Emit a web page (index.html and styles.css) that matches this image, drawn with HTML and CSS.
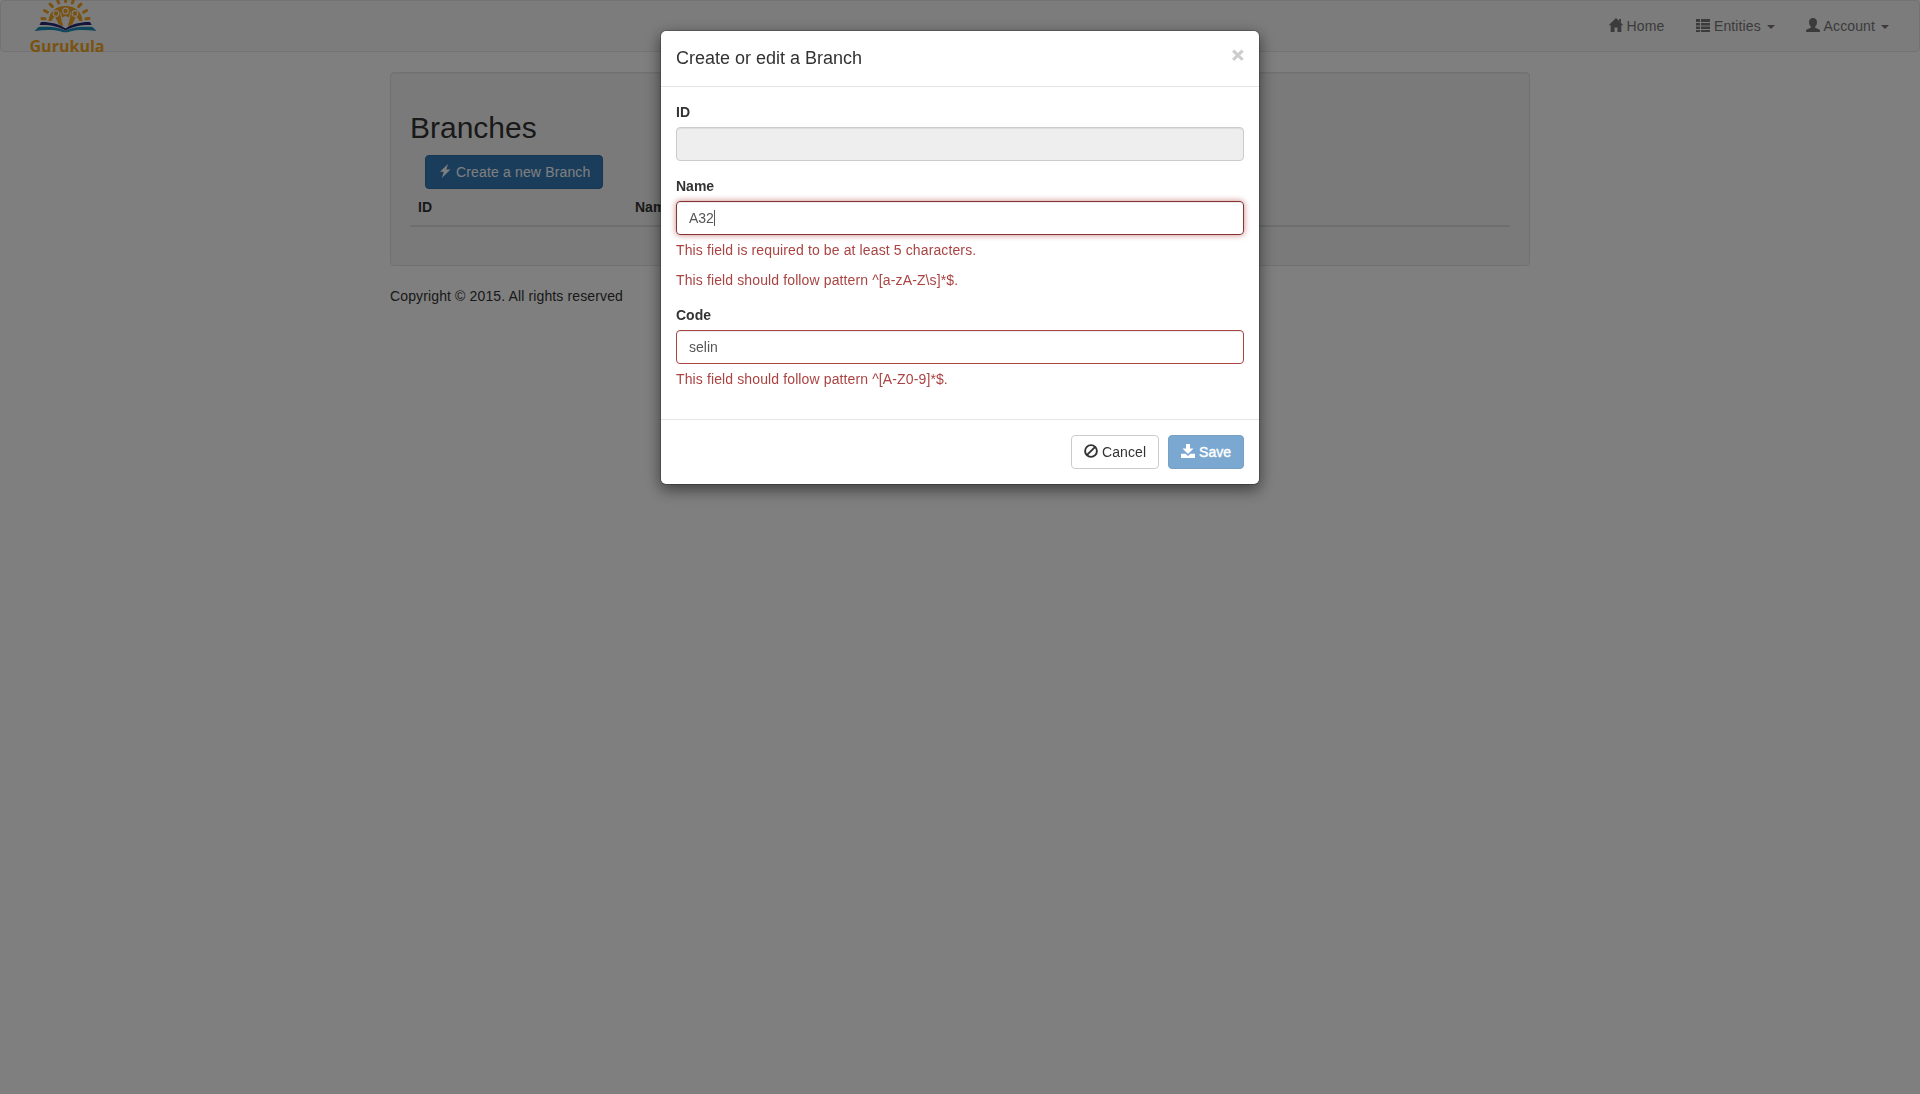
FILE: index.html
```html
<!DOCTYPE html>
<html lang="en">
<head>
<meta charset="utf-8">
<title>Branches</title>
<link rel="stylesheet" href="styles.css">
</head>
<body>
<nav class="navbar">
  <a class="brand" aria-label="Gurukula">
    <svg width="84" height="56" viewBox="0 0 84 56">
      <path fill="none" stroke="#f5a623" stroke-width="3" stroke-linecap="round" d="M16 18.500l3 .3M18.500 10.500l3 1.700M24 4l2.300 2.600M31.500 0l1.200 3M39.500 -2v3.500M47.500 0l-1.200 3M55 4l-2.300 2.600M60.500 10.500l-3 1.700M63 18.500l-3 .3"/>
      <path fill="#f5a623" d="M22.500 21C23 12 30 6 39.500 6S56 12 56.500 21l-3.500-.2c-.5-2-1.500-3.300-3-4.300L46.500 24l-4.500 2.500 1-9-3.500-1.500-3.500 1.500 1 9-4.500-2.500L29 16.500c-1.500 1-2.500 2.300-3 4.300z"/>
      <g fill="#f5a623" stroke="#f8f8f8" stroke-width="1.200"><circle cx="30" cy="13.500" r="2.800"/><circle cx="39.500" cy="11" r="2.800"/><circle cx="49" cy="13.500" r="2.800"/></g>
      <path fill="none" stroke="#f8f8f8" stroke-width="1" d="M34.500 12.500L36.500 23M44.500 12.500L42.500 23"/>
      <path fill="#2b2a78" d="M15 22c9-.2 18 1.800 24.500 6.500C46 23.800 55 21.800 64 22l1.700 3C56 24.500 46 26.500 39.500 30.500 33 26.500 24 24.500 13.500 25z"/>
      <path fill="#1d8cbd" d="M12.500 27C24 26 33 27 39.500 30.500 46 27 55 26 66.500 27l4 4C59 29.700 49 29.500 41.500 32.300h-4C30 29.500 20 29.700 8.500 31z"/>
      <text class="brand-text" x="3.500" y="52" textLength="75" lengthAdjust="spacingAndGlyphs">Gurukula</text>
    </svg>
  </a>
  <div class="menu">
    <a><svg class="icon" viewBox="0 0 14 14"><path d="M7 0l7.300 7.200h-2V14H8.500V9.500h-3V14H1.700V7.200h-2L7 0z"/><path d="M10 1h2v4l-2-2z"/></svg> Home</a>
    <a><svg class="icon" viewBox="0 0 14 14"><path d="M0 1h4v3H0zM5 1h9v3H5zM0 5h4v2.500H0zM5 5h9v2.500H5zM0 8.500h4V11H0zM5 8.500h9V11H5zM0 12h4v2H0zM5 12h9v2H5z"/></svg> Entities <b class="caret"></b></a>
    <a><svg class="icon" viewBox="0 0 14 14"><path d="M7 0c2.600 0 4 1.800 4 4.300 0 1.800-.8 3.400-1.800 4.300v1.200c1.600.8 4.800 1.400 4.800 3V14H0v-1.200c0-1.600 3.200-2.200 4.800-3V8.600C3.800 7.700 3 6.100 3 4.300 3 1.800 4.400 0 7 0z"/></svg> Account <b class="caret"></b></a>
  </div>
</nav>
<main class="container">
  <section class="well">
    <h2>Branches</h2>
    <div class="actions"><button class="btn primary create"><svg class="icon" viewBox="0 0 14 14"><path d="M10 0L2 7.800h3.800L3.800 14 12.500 5.500H8.300z"/></svg> Create a new Branch</button></div>
    <table><thead><tr><th class="col-id">ID</th><th>Name</th></tr></thead></table>
  </section>
  <p class="copyright">Copyright © 2015. All rights reserved</p>
</main>
<div class="backdrop">
  <form class="modal">
    <header><h4>Create or edit a Branch</h4><span class="close">×</span></header>
    <div class="modal-body">
      <div class="group"><label>ID</label><div class="input readonly"></div></div>
      <div class="group"><label>Name</label><div class="input invalid focused">A32<span class="cursor"></span></div>
        <p>This field is required to be at least 5 characters.</p>
        <p>This field should follow pattern ^[a-zA-Z\s]*$.</p></div>
      <div class="group"><label>Code</label><div class="input invalid">selin</div>
        <p>This field should follow pattern ^[A-Z0-9]*$.</p></div>
    </div>
    <footer>
      <button type="button" class="btn"><svg class="icon" viewBox="0 0 14 14"><g fill="none" stroke="currentColor" stroke-width="1.900"><circle cx="7" cy="7" r="5.900"/><path d="M2.800 11.200l8.400-8.400"/></g></svg> Cancel</button>
      <button type="button" class="btn primary disabled"><svg class="icon" viewBox="0 0 14 14"><path d="M5 0h4v4.500h3.500L7 10 1.500 4.500H5zM0 9.800h4.500L7 12l2.500-2.200H14V14H0z"/></svg> Save</button>
    </footer>
  </form>
</div>
</body>
</html>
```
FILE: styles.css
```css
* { box-sizing: border-box; }
body { margin: 0; font: 14px/20px "Liberation Sans", Arial, sans-serif; color: #333; background: #fff; overflow: hidden; }
.navbar { display: flex; justify-content: space-between; height: 52px; margin-bottom: 20px; padding: 0 15px 0 25px; border: 1px solid #e7e7e7; border-radius: 4px; background: #f8f8f8; }
.brand { height: 50px; margin-top: -1px; }
.brand svg { display: block; overflow: visible; }
.brand-text { font: bold 15.5px "Open Sans", sans-serif; fill: #f5a623; }
.menu { display: flex; gap: 1.5px; color: #777; letter-spacing: .12px; }
.menu a { padding: 15px; line-height: 20px; white-space: nowrap; }
.icon { display: inline-block; width: 14px; height: 14px; vertical-align: -2px; fill: currentColor; overflow: visible; }
.menu .icon { vertical-align: -1px; }
.caret { display: inline-block; margin-left: 2px; vertical-align: middle; border-top: 4px solid; border-right: 4px solid transparent; border-left: 4px solid transparent; }
.container { width: 1140px; margin: 0 auto; }
.well { height: 194px; padding: 19px; margin-bottom: 20px; border: 1px solid #e3e3e3; border-radius: 4px; background: #f5f5f5; box-shadow: inset 0 1px 1px rgba(0,0,0,.05); }
h2 { margin: 19px 0 11px; font-size: 30px; font-weight: 500; line-height: 1.1; }
.actions { padding-left: 15px; height: 34px; }
.btn { height: 34px; padding: 6px 12px; border: 1px solid #ccc; border-radius: 4px; background: #fff; color: #333; font: inherit; letter-spacing: .1px; white-space: nowrap; }
.btn .icon { vertical-align: -1px; }
.primary { color: #fff; border-color: #2e6da4; background: #337ab7; }
.create { letter-spacing: .15px; }
table { width: 100%; table-layout: fixed; border-collapse: separate; border-spacing: 0; }
th { padding: 8px; text-align: left; border-bottom: 2px solid #ddd; }
.col-id { width: 217px; }
.copyright { margin: 0; letter-spacing: .13px; }
.backdrop { position: fixed; inset: 0; background: rgba(0,0,0,.5); }
.modal { width: 600px; margin: 30px auto; border: 1px solid rgba(0,0,0,.2); border-radius: 6px; background: #fff; background-clip: padding-box; box-shadow: 0 5px 15px rgba(0,0,0,.5); }
header { display: flex; justify-content: space-between; height: 56px; padding: 15px; border-bottom: 1px solid #e5e5e5; }
h4 { margin: 0; font-size: 18px; font-weight: 500; line-height: 25px; }
.close { margin-top: -2px; font-size: 21px; font-weight: bold; line-height: 1; height: 21px; color: #000; opacity: .2; -webkit-text-stroke: .8px #000; }
.modal-body { padding: 15px; }
.group { margin-bottom: 15px; }
label { display: block; margin-bottom: 5px; font-weight: bold; }
.input { height: 34px; padding: 6px 12px; border: 1px solid #ccc; border-radius: 4px; color: #555; box-shadow: inset 0 1px 1px rgba(0,0,0,.075); }
.readonly { background: #eee; }
.invalid { border-color: #a94442; }
.focused { border-color: #843534; box-shadow: inset 0 1px 1px rgba(0,0,0,.075), 0 0 6px #ce8483; }
.cursor { display: inline-block; width: 1px; height: 16px; vertical-align: -3px; background: #555; }
.group p { margin: 5px 0 10px; color: #a94442; letter-spacing: .12px; }
footer { display: flex; justify-content: flex-end; gap: 9px; padding: 15px; border-top: 1px solid #e5e5e5; }
.disabled { opacity: .65; letter-spacing: 0; -webkit-text-stroke: .4px #fff; }
```
